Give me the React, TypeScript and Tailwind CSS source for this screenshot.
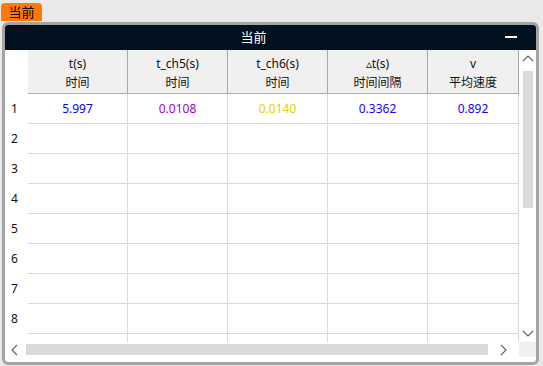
const font = "font-['Noto_Sans','Noto_Sans_CJK_SC',sans-serif]";

interface Column {
  top: string;
  bottom: string;
  value?: string;
  color: string;
  width: string;
}

const columns: Column[] = [
  { top: "t(s)", bottom: "时间", value: "5.997", color: "text-[#0000ff]", width: "w-[100px]" },
  { top: "t_ch5(s)", bottom: "时间", value: "0.0108", color: "text-[#9b00d4]", width: "w-[100px]" },
  { top: "t_ch6(s)", bottom: "时间", value: "0.0140", color: "text-[#e3cf00]", width: "w-[100px]" },
  { top: "\u25b5t(s)", bottom: "时间间隔", value: "0.3362", color: "text-[#1a00ff]", width: "w-[100px]" },
  { top: "v", bottom: "平均速度", value: "0.892", color: "text-[#1a00ff]", width: "w-[91px]" },
];

// row 9 is only partly visible, under the scrollbar
const rows = [1, 2, 3, 4, 5, 6, 7, 8, 9];

function Chevron({ dir }: { dir: "up" | "down" | "left" | "right" }) {
  const pts = {
    up: "1,7 6,2 11,7",
    down: "1,3 6,8 11,3",
    left: "7,1 2,6 7,11",
    right: "3,1 8,6 3,11",
  }[dir];
  return (
    <svg width="12" height="12" viewBox="0 0 12 12" fill="none">
      <polyline points={pts} stroke="#606060" strokeWidth="1.1" />
    </svg>
  );
}

export default function App() {
  return (
    <div className={`h-[366px] w-[543px] overflow-hidden bg-[#e9e9e9] ${font}`}>
      {/* Tab */}
      <div className="ml-[1px] mt-[3px] flex h-[18px] w-[41px] items-center justify-center rounded-t-[4px] bg-[#ff7a00] text-[13px] leading-none text-black">
        当前
      </div>

      {/* Panel */}
      <div className="ml-[2px] mt-[1px] w-[537px] overflow-hidden rounded-[6px] border-[3px] border-[#a4a4a4] bg-white">
        {/* Title bar */}
        <div className="relative flex h-[25px] items-center justify-center bg-[#01111f] pr-[34px] text-[13px] text-white">
          当前
          <span className="absolute right-[19px] top-[11px] h-[2px] w-[12px] bg-white" />
        </div>

        <div className="flex h-[292px]">
          {/* Table */}
          <div className="flex-1 overflow-hidden text-[12px]">
            {/* Header */}
            <div className="flex h-[44px]">
              <div className="w-[23px] bg-white" />
              {columns.map((c) => (
                <div
                  key={c.top}
                  className={`${c.width} flex flex-col items-center justify-center border-b border-r border-[#a8a8a8] border-b-[#b0b0b0] bg-[#f0f0f0] pt-[2px] leading-[19px] text-[#111]`}
                >
                  <span>{c.top}</span>
                  <span>{c.bottom}</span>
                </div>
              ))}
            </div>

            {/* Body */}
            {rows.map((r) => (
              <div key={r} className="flex h-[30px]">
                <div className="flex w-[23px] items-center pl-[6px] text-[#111]">{r < 9 ? r : ""}</div>
                {columns.map((c) => (
                  <div
                    key={c.top}
                    className={`${c.width} flex items-center justify-center border-b border-r border-[#d9d9d9] ${c.color}`}
                  >
                    {r === 1 ? c.value : ""}
                  </div>
                ))}
              </div>
            ))}
          </div>

          {/* Vertical scrollbar */}
          <div className="flex w-[17px] flex-col items-center bg-white">
            <div className="flex h-[17px] items-center justify-center pt-[2px]">
              <Chevron dir="up" />
            </div>
            <div className="mt-[4px] h-[137px] w-[10px] bg-[#dadada]" />
            <div className="flex-1" />
            <div className="flex h-[17px] items-center justify-center">
              <Chevron dir="down" />
            </div>
          </div>
        </div>

        {/* Horizontal scrollbar */}
        <div className="flex h-[15px] items-center">
          <div className="flex w-[21px] items-center justify-center">
            <Chevron dir="left" />
          </div>
          <div className="h-[11px] w-[462px] bg-[#dadada]" />
          <div className="flex flex-1 items-center justify-center">
            <Chevron dir="right" />
          </div>
          <div className="h-[15px] w-[17px] bg-[#f0f0f0]" />
        </div>
        <div className="h-[5px]" />
      </div>
    </div>
  );
}
